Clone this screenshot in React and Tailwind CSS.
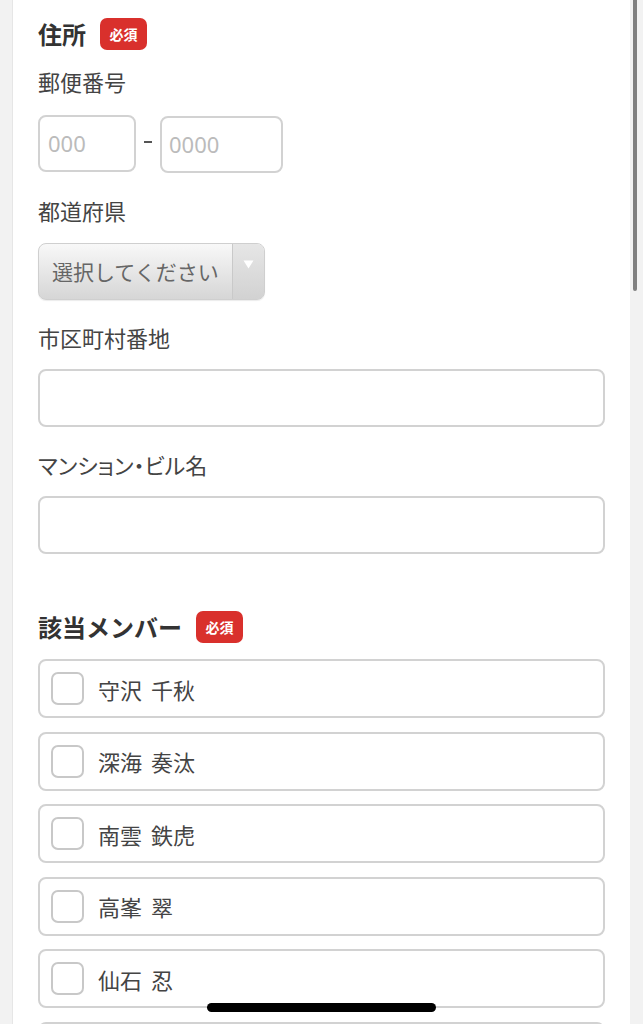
import React from "react";

const font = { fontFamily: '"Noto Sans CJK JP", "Noto Sans", sans-serif' };

function Badge() {
  return (
    <span className="ml-[14px] inline-flex h-[32px] w-[47px] items-center justify-center rounded-[7px] bg-[#d9302c] text-[14px] font-bold leading-none text-white">
      必須
    </span>
  );
}

function Label({ children, className = "" }) {
  return (
    <div className={"text-[22px] leading-[32px] text-[#444] " + className}>{children}</div>
  );
}

function TextInput({ className = "" }) {
  return (
    <div className={"h-[58px] w-[567px] rounded-[8px] border-2 border-[#d2d2d2] bg-white " + className} />
  );
}

function MemberRow({ last, first }) {
  return (
    <div className="flex h-[59px] w-[567px] items-center rounded-[8px] border-2 border-[#d2d2d2] bg-white pl-[11px]">
      <div className="h-[33px] w-[33px] rounded-[7px] border-2 border-[#c8c8c8] bg-white" />
      {last && (
        <span className="ml-[14px] flex gap-[9px] text-[22px] leading-none text-[#444]">
          <span>{last}</span>
          <span>{first}</span>
        </span>
      )}
    </div>
  );
}

export default function App() {
  const members = [
    ["守沢", "千秋"],
    ["深海", "奏汰"],
    ["南雲", "鉄虎"],
    ["高峯", "翠"],
    ["仙石", "忍"],
    [null, null],
  ];
  return (
    <div className="relative h-[1024px] overflow-hidden bg-[#f2f2f2]" style={font}>
      <div className="ml-[12px] mr-[13px] h-full border-l border-[#e6e6e6] bg-white pl-[25px] pr-[24px] pt-[18px]">
        <div className="flex h-[32px] items-center">
          <span className="text-[24px] font-bold leading-none text-[#333]">住所</span>
          <Badge />
        </div>

        <Label className="mt-[15px]">郵便番号</Label>
        <div className="mt-[18px] flex items-start">
          <div className="flex h-[57px] w-[98px] items-center rounded-[8px] border-2 border-[#d2d2d2] pl-[8px] text-[22px] text-[#bbbbbb]" style={{ fontFamily: '"Noto Sans", sans-serif' }}>
            000
          </div>
          <span className="mx-[8px] mt-[26px] h-[2px] w-[8px] bg-[#555]" />
          <div className="mt-[1px] flex h-[57px] w-[123px] items-center rounded-[8px] border-2 border-[#d2d2d2] pl-[7px] text-[22px] text-[#bbbbbb]" style={{ fontFamily: '"Noto Sans", sans-serif' }}>
            0000
          </div>
        </div>

        <Label className="mt-[21px]">都道府県</Label>
        <div className="mt-[17px] flex h-[57px] w-[227px] overflow-hidden rounded-[8px] border border-[#cfcfcf] bg-gradient-to-b from-[#f8f8f8] to-[#d6d6d6] shadow-[0_1px_1px_rgba(0,0,0,0.08)]">
          <div className="flex flex-1 items-center pl-[13px] text-[21px] text-[#666]">選択してください</div>
          <div className="flex w-[32px] items-center justify-center border-l border-[#c9c9c9] bg-gradient-to-b from-[#e6e6e6] to-[#d2d2d2] pb-[14px]">
            <svg width="11" height="9" viewBox="0 0 11 9">
              <path d="M0.5 0.5 L10.5 0.5 L5.5 8.5 Z" fill="#ffffff" />
            </svg>
          </div>
        </div>

        <Label className="mt-[21px]">市区町村番地</Label>
        <TextInput className="mt-[16px]" />

        <Label className="mt-[21px] [font-feature-settings:'palt']">マンション・ビル名</Label>
        <TextInput className="mt-[16px]" />

        <div className="mt-[57px] flex h-[32px] items-center">
          <span className="text-[24px] font-bold leading-none text-[#333]">該当メンバー</span>
          <Badge />
        </div>

        <div className="mt-[16px] flex flex-col gap-[13.5px]">
          {members.map((m, i) => (
            <MemberRow key={i} last={m[0]} first={m[1]} />
          ))}
        </div>
      </div>

      <div className="absolute right-[6px] top-0 h-[291px] w-[4px] rounded-b-full bg-[#808080]" />
      <div className="absolute bottom-[12px] left-[207px] h-[9px] w-[229px] rounded-full bg-black" />
    </div>
  );
}
